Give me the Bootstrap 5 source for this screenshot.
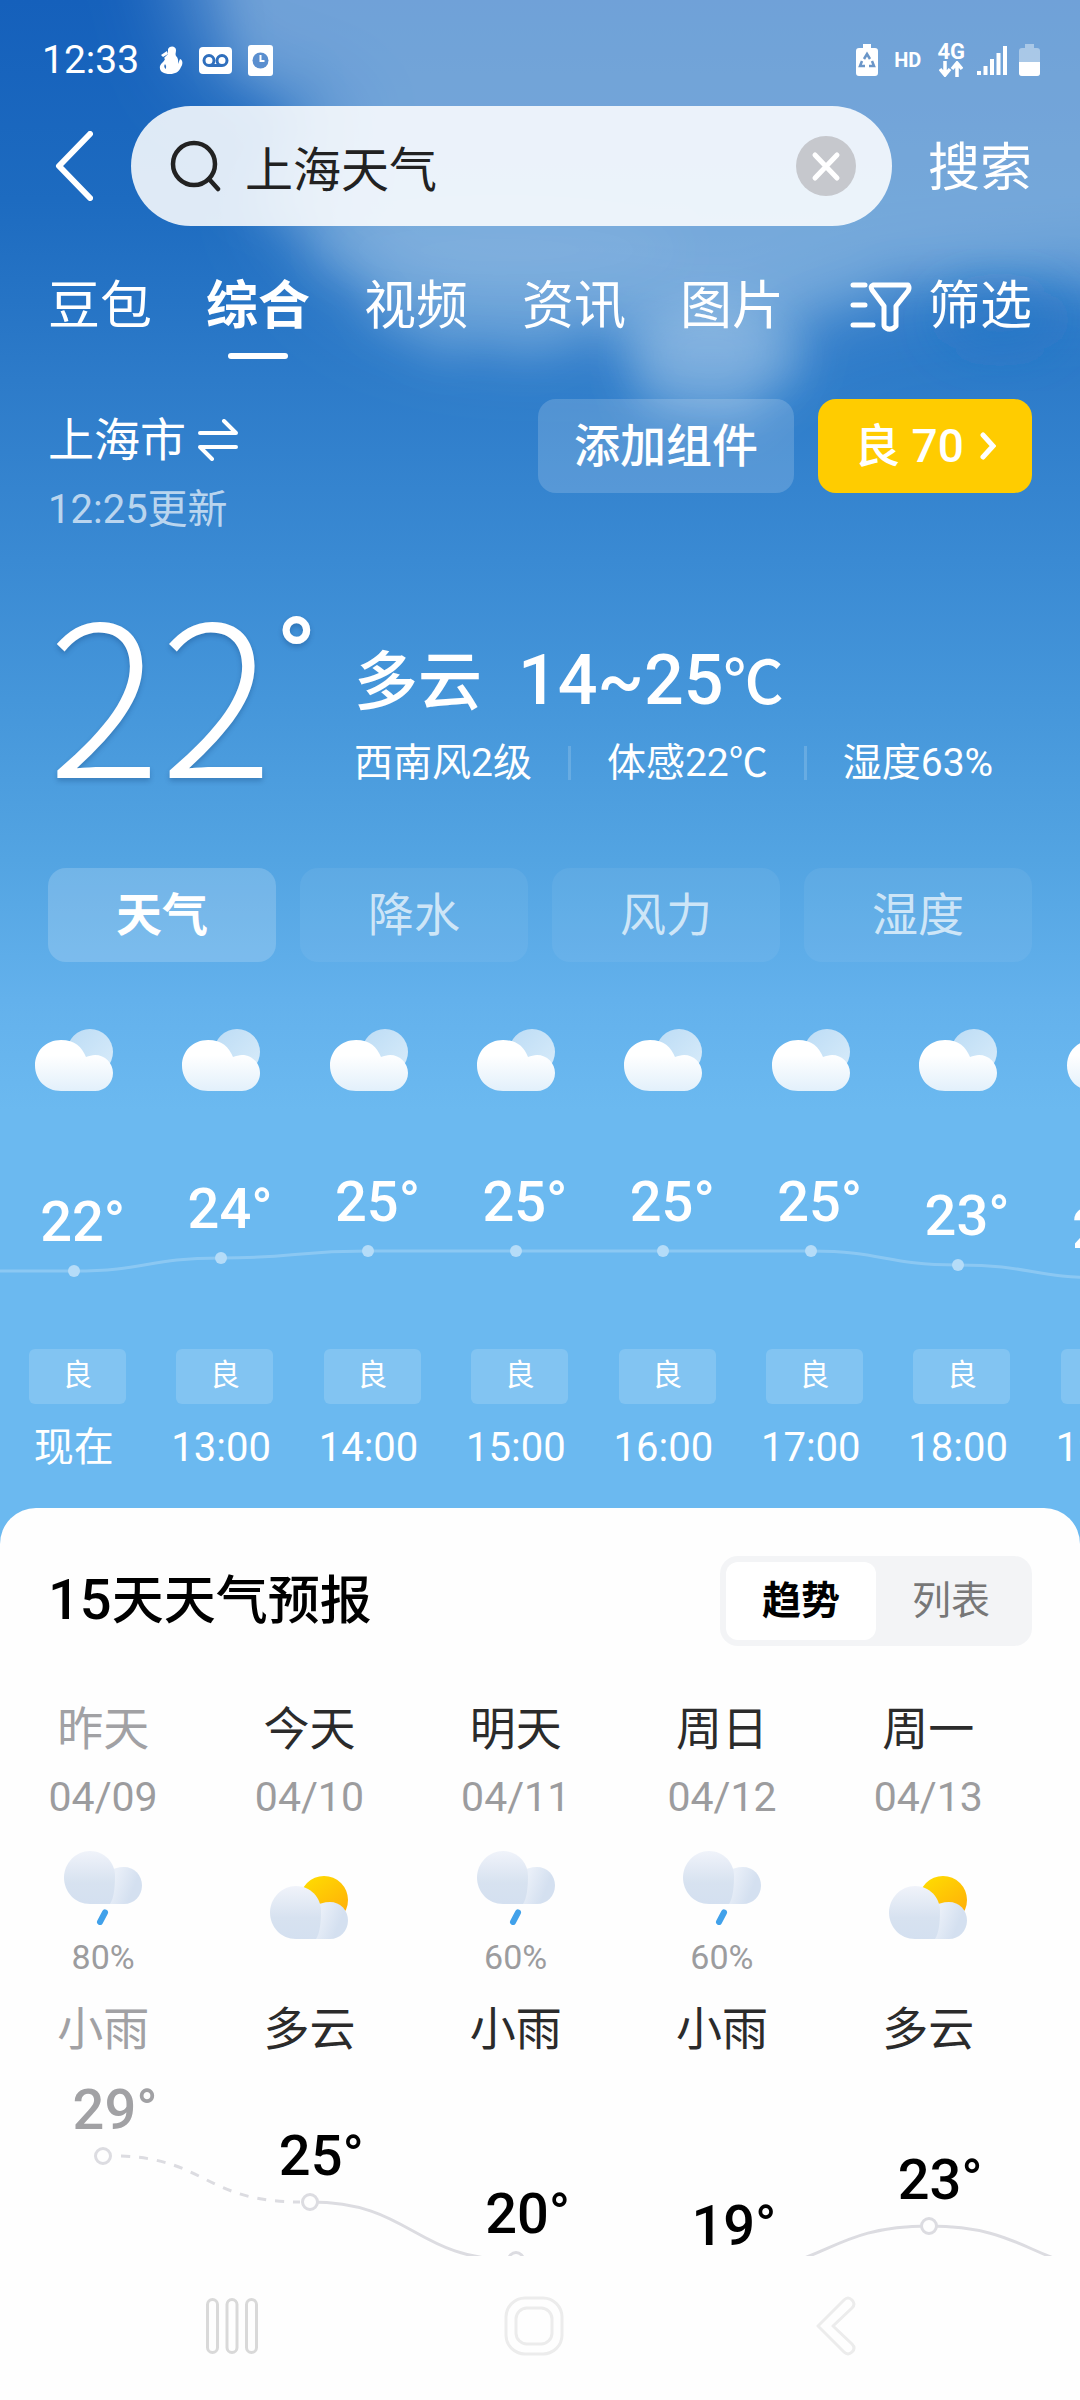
<!DOCTYPE html>
<html lang="zh-CN">
<head>
<meta charset="utf-8">
<meta name="viewport" content="width=device-width, initial-scale=1">
<title>上海天气</title>
<link href="https://cdn.jsdelivr.net/npm/bootstrap@5.3.0/dist/css/bootstrap.min.css" rel="stylesheet">
<style>
body{font-family:Roboto,"Noto Sans CJK SC",sans-serif;font-size:40px;line-height:48px;color:#fff;background:#fefefe;overflow-x:hidden}
a{text-decoration:none;color:inherit}
svg{display:block;flex:none}
.btn{--bs-btn-border-width:0px;--bs-btn-padding-x:0px;--bs-btn-padding-y:0px}
.sky{background:linear-gradient(#1560bb 0,#1d6bc0 200px,#2d7bc9 380px,#3a8ad3 560px,#4596da 700px,#53a4e2 860px,#63b1ec 1000px,#6bb9f0 1110px)}
.sky-clouds{position:absolute;top:0;left:0;width:100%;height:480px;z-index:0}
.gutter{padding-left:48px;padding-right:48px}
.status-row{padding:36px 40px 22px 42px}
.status-time{font-size:39px}
.hd-tag{font-size:20px;line-height:24px;font-weight:700}
.net-tag{font-size:22px;line-height:18px;font-weight:700}
.back-btn{flex:none;width:83px;height:120px;padding-left:7px!important}
.go-btn{flex:none;padding-top:5px!important}
.search-pill{height:120px;border-radius:60px;background:rgba(255,255,255,.86);padding:0 36px 0 38px;margin-right:36px}
.search-pill input{font-size:48px;line-height:60px;color:#222;padding:10px 0 0!important}
.search-pill input:focus{color:#222}
.t-52{font-size:52px;line-height:60px}
.t-46{font-size:46px;line-height:56px}
.tab-row{padding-top:51px}
.tab-list{gap:54px}
.tab-list .nav-link{padding:0;color:#fff}
.tab-list .active{font-weight:700}
.tab-list .active::after{content:"";display:block;width:60px;height:6px;border-radius:3px;background:#fff;margin:16px auto 0}
.place-row{margin-top:40px}
.place{padding-top:13px}
.place-swap{margin-left:12px}
.updated{margin-top:18px;color:rgba(255,255,255,.68)}
.pill-btn{height:94px;border-radius:18px;font-size:46px;line-height:56px;font-weight:500;color:#fff}
.pill-add{width:256px;background:rgba(255,255,255,.17)}
.pill-air{width:214px;background:#fc0}
.now-row{margin-top:63px}
.now-temp{width:306px;font-family:"Noto Sans CJK SC",sans-serif;font-size:210px;line-height:178px;font-weight:300;text-shadow:0 3px 5px rgba(0,40,90,.25)}
.now-deg{margin-left:3px;font-family:Roboto,sans-serif;font-size:108px;line-height:120px;font-weight:500}
.now-info{padding-top:43px}
.now-main{font-size:64px;line-height:80px;font-weight:500;gap:36px}
.now-range{font-size:70px}
.now-unit{font-size:60px}
.now-facts{margin-top:15px;font-size:39px;gap:36px}
.fact-line{width:3px;height:34px;background:rgba(255,255,255,.16)}
.chip-row{margin-top:81px;gap:24px}
.chip{height:94px;border-radius:18px;font-size:46px;line-height:56px;color:rgba(255,255,255,.7);background:rgba(255,255,255,.06)}
.chip.active{color:#fff;font-weight:700;background:rgba(255,255,255,.18)}
.hours{margin-top:67px;margin-bottom:36px}
.hour-col{flex:none;width:13.65%}
.hour-temp{height:257px}
.big-temp{font-size:56px;line-height:60px;font-weight:500;padding-left:18px}
.hour-line{position:absolute;left:0;top:63px;width:100%;height:257px}
.air-tag{width:97px;height:55px;border-radius:6px;margin-left:29px;background:rgba(255,255,255,.16);font-size:30px;line-height:52px}
.hour-time{margin-top:20px}
.sheet{background:#fefefe;color:#2b2b2b;border-radius:36px 36px 0 0;padding-top:48px}
.sheet-title{font-size:52px;line-height:60px;font-weight:500;color:#000}
.sheet-title span{font-size:56px}
.seg{background:#f3f4f6;border-radius:18px;padding:6px}
.seg .btn{width:150px;height:78px;border-radius:12px;font-size:39px;line-height:48px;color:#777}
.seg .btn.active{background:#fff;color:#000;font-weight:700}
.days{margin-top:55px}
.day-col{flex:none;width:19.1%}
.soft{color:#9c9c9e}
.day-date{margin-top:16px;font-size:41px}
.day-icon{height:142px;margin-top:15px}
.day-rain{font-size:34px;line-height:38px;margin-top:13px;margin-bottom:2px}
.day-text{margin-top:23px}
.day-temp{height:199px;padding-left:24px;color:#000}
.past .day-temp,.past .day-name,.past .day-text{color:#a1a1a4}
.day-line{position:absolute;left:0;bottom:0;width:100%;height:198px}
.phone-nav{height:144px;background:#fefefe;padding:0 224px 4px 206px}
</style>
</head>
<body>
<svg width="0" height="0" class="position-absolute" aria-hidden="true">
<defs>
<linearGradient id="gw" x1="0" y1="0" x2="0" y2="1"><stop offset=".3" stop-color="#fff"/><stop offset="1" stop-color="#e2f0fb"/></linearGradient>
<linearGradient id="gb" x1="0" y1="0" x2="1" y2="1"><stop offset="0" stop-color="#bcdcf5"/><stop offset="1" stop-color="#d9ecfa"/></linearGradient>
<linearGradient id="gs" x1="0" y1="0" x2=".7" y2="1"><stop offset="0" stop-color="#ffe000"/><stop offset="1" stop-color="#ffad0a"/></linearGradient>
<linearGradient id="gc" x1="0" y1="0" x2="0" y2="1"><stop offset="0" stop-color="#f0f3fa"/><stop offset=".6" stop-color="#d7e2f0"/><stop offset="1" stop-color="#d4e0f0"/></linearGradient>
<linearGradient id="gc2" gradientUnits="userSpaceOnUse" x1="50" y1="28" x2="70" y2="36"><stop offset="0" stop-color="#e9eff8"/><stop offset="1" stop-color="#d4e0f0"/></linearGradient>
<symbol id="cloudy" viewBox="0 0 78 63"><circle cx="55" cy="23" r="23" fill="url(#gb)"/><path d="M26 11C40 11 47 18 51 28c3-1 6-2 9-2 10 0 18 8 18 18s-8 18-18 18H26C11 62 0 51 0 36.500S11 11 26 11Z" fill="url(#gw)"/></symbol>
<symbol id="greycloud" viewBox="0 0 78 53"><path d="M60 16c10 0 18 8 18 18.500S70 53 60 53H40L46 20c3-2 8-4 14-4Z" fill="url(#gc2)"/><path d="M26 0c14 0 25 11 25 25 0 10-1 22-5 28H26C11 53 0 41 0 26.500S12 0 26 0Z" fill="url(#gc)"/></symbol>
<symbol id="rain" viewBox="0 0 78 74"><use href="#greycloud" width="78" height="53"/><path d="M41 61.500 36 71" stroke="#41a1ea" stroke-width="6" stroke-linecap="round"/></symbol>
<symbol id="partly" viewBox="0 0 78 63"><circle cx="54" cy="24" r="24" fill="url(#gs)"/><use href="#greycloud" y="10" width="78" height="53"/></symbol>
</defs>
</svg>

<div class="sky position-relative">
<svg class="sky-clouds" viewBox="0 0 1080 480" preserveAspectRatio="none" aria-hidden="true">
<defs>
<filter id="wisp" x="-10%" y="-20%" width="120%" height="140%"><feTurbulence type="fractalNoise" baseFrequency=".014 .018" numOctaves="5" seed="11" result="n"/><feDisplacementMap in="SourceGraphic" in2="n" scale="90" xChannelSelector="R" yChannelSelector="G" result="d"/><feGaussianBlur in="d" stdDeviation="20"/></filter>
<filter id="haze" x="-20%" y="-20%" width="140%" height="140%"><feGaussianBlur stdDeviation="42"/></filter>
<filter id="soft" x="-60%" y="-60%" width="220%" height="220%"><feGaussianBlur stdDeviation="24"/></filter>
</defs>
<path filter="url(#haze)" fill="#f0fcff" fill-opacity=".3" d="M150-120H1250V265L1000 280 860 300 790 330C760 360 680 350 620 330L470 330 370 300 270 200 350 120 200 70Z"/>
<path filter="url(#wisp)" fill="#f0fcff" fill-opacity=".16" d="M200-90H1200V285L1010 275 890 285 790 310C810 380 780 430 710 430L630 410 590 340 480 360 390 340 330 260 250 200 280 130 330 110 240 60Z"/>
<ellipse filter="url(#soft)" cx="710" cy="355" rx="75" ry="50" fill="#fff" fill-opacity=".2"/>
<ellipse filter="url(#soft)" cx="500" cy="250" rx="180" ry="30" fill="#fff" fill-opacity=".07"/>
<ellipse filter="url(#soft)" cx="1000" cy="320" rx="60" ry="32" fill="#2474c5" fill-opacity=".45"/>
</svg>

<div class="position-relative">
<div class="status-row d-flex align-items-center justify-content-between">
<div class="d-flex align-items-center gap-3">
<span class="status-time">12:33</span>
<svg class="ms-1" width="24" height="28" viewBox="0 0 24 28" fill="#fff"><path d="M9 3c2-4 8-3 8 1 0 3-1 4 0 6 3 3 2 6 2 8l2-5c3 1 3 5 1 8-2 5-6 7-11 7C4 28 0 25 1 20c1-3 4-4 5-7l-1-1 4-4Z"/><path d="M2 9l6-4 1 3-5 3Z"/><path d="M6 18q2 2 1 5-3-2-1-5Z" fill="#2f6fbd"/></svg>
<svg width="33" height="27" viewBox="0 0 33 27"><rect width="33" height="27" rx="4" fill="#fff"/><g fill="none" stroke="#2f6fbd" stroke-width="3"><circle cx="10" cy="13.500" r="5"/><circle cx="23" cy="13.500" r="5"/><path d="M10 18.500h13"/></g></svg>
<svg width="25" height="31" viewBox="0 0 25 31"><rect width="25" height="31" rx="3" fill="#fff"/><circle cx="12.500" cy="15.500" r="8" fill="#5b8fcf"/><path d="M12.500 10v6h4" fill="none" stroke="#fff" stroke-width="2"/></svg>
</div>
<div class="d-flex align-items-center">
<svg width="22" height="32" viewBox="0 0 22 32"><path d="M7 0h8v4h4q3 0 3 3v22q0 3-3 3H3q-3 0-3-3V7q0-3 3-3h4Z" fill="#fff"/><g fill="none" stroke="#6b96c8" stroke-width="2.500"><path d="M8 15l3-5 3 5M6 17l-2 5h5M16 17l2 5h-5"/></g></svg>
<span class="hd-tag ms-3 me-3">HD</span>
<div class="d-flex flex-column align-items-center"><span class="net-tag">4G</span><svg width="24" height="16" viewBox="0 0 24 16" fill="none" stroke="#fff" stroke-width="3.500"><path d="M6 0v13M1 8l5 6 5-6M18 16V3M13 8l5-6 5 6"/></svg></div>
<svg class="ms-2 me-2" width="38" height="29" viewBox="0 0 38 29" stroke="#fff" stroke-width="4"><path d="M6 25v4M12.500 20v9M19 13v16M25.500 7v22M32 0v29"/></svg>
<svg width="21" height="32" viewBox="0 0 21 32"><path d="M6 0h9v4h3q3 0 3 3v22q0 3-3 3H3q-3 0-3-3V7q0-3 3-3h3Z" fill="#fff" fill-opacity=".4"/><path d="M0 18h21v11q0 3-3 3H3q-3 0-3-3Z" fill="#fff"/></svg>
</div>
</div>

<form class="gutter d-flex align-items-center" onsubmit="return false">
<button type="button" class="btn back-btn text-start" aria-label="返回"><svg width="38" height="70" viewBox="0 0 38 70" fill="none" stroke="#fff" stroke-width="6" stroke-linecap="round" stroke-linejoin="round"><path d="M35 3 4 35l31 32"/></svg></button>
<div class="search-pill d-flex align-items-center flex-fill">
<svg width="52" height="52" viewBox="0 0 52 52" fill="none" stroke="#222" stroke-width="4.500" stroke-linecap="round"><circle cx="25" cy="24" r="21"/><path d="M40 39l9 10"/></svg>
<input id="q" type="text" class="form-control border-0 bg-transparent shadow-none ms-4" value="上海天气" aria-label="搜索内容">
<button type="button" class="btn" aria-label="清除"><svg width="60" height="60" viewBox="0 0 60 60"><circle cx="30" cy="30" r="30" fill="#c6c8cd"/><path d="M19 19l22 23M41 19 19 42" stroke="#fff" stroke-width="5" stroke-linecap="round"/></svg></button>
</div>
<button type="submit" class="btn go-btn t-52 text-white text-nowrap">搜索</button>
</form>

<nav class="gutter tab-row d-flex justify-content-between align-items-start t-52">
<div class="nav tab-list flex-nowrap">
<a class="nav-link" href="#">豆包</a><a class="nav-link active" href="#" aria-current="page">综合</a><a class="nav-link" href="#">视频</a><a class="nav-link" href="#">资讯</a><a class="nav-link" href="#">图片</a>
</div>
<a href="#" class="d-flex align-items-center"><svg class="me-3" width="62" height="52" viewBox="0 0 62 52" fill="none" stroke="#fff" stroke-width="5" stroke-linecap="round" stroke-linejoin="round"><path d="M3 4h12M3 24h12M3 44h20M23 4h35q2 3 0 6L46 25v20q-5 5-10 2-2-1-2-3V25L22 9q-2-4 1-5Z"/></svg>筛选</a>
</nav>

<div class="gutter place-row d-flex justify-content-between align-items-start">
<div class="place">
<a href="#" class="d-flex align-items-center t-46">上海市<svg class="place-swap" width="40" height="42" viewBox="0 0 40 42" fill="none" stroke="#fff" stroke-width="4" stroke-linecap="round" stroke-linejoin="round"><path d="M2 14h36L26 2M38 28H2l12 12"/></svg></a>
<div class="updated">12:25更新</div>
</div>
<div class="d-flex gap-4">
<button type="button" class="btn pill-btn pill-add">添加组件</button>
<button type="button" class="btn pill-btn pill-air d-flex align-items-center justify-content-center">良 70<svg class="ms-3" width="16" height="28" viewBox="0 0 16 28" fill="none" stroke="#fff" stroke-width="5" stroke-linecap="round"><path d="M3 3l10 11L3 25"/></svg></button>
</div>
</div>

<div class="gutter now-row d-flex">
<div class="now-temp d-flex align-items-start">22<span class="now-deg">°</span></div>
<div class="now-info">
<div class="now-main d-flex align-items-baseline"><span>多云</span><span class="now-range">14~25<span class="now-unit">℃</span></span></div>
<div class="now-facts d-flex align-items-center"><span>西南风2级</span><i class="fact-line"></i><span>体感22℃</span><i class="fact-line"></i><span>湿度63%</span></div>
</div>
</div>

<div class="gutter chip-row d-flex">
<button type="button" class="btn chip active flex-fill">天气</button>
<button type="button" class="btn chip flex-fill">降水</button>
<button type="button" class="btn chip flex-fill">风力</button>
<button type="button" class="btn chip flex-fill">湿度</button>
</div>

<div class="hours d-flex position-relative overflow-hidden text-center">
<svg class="hour-line" viewBox="0 0 1080 257" preserveAspectRatio="none" aria-hidden="true">
<path d="M0 179H74C147 179 147 166 221 166S295 159 368 159H811C884 159 884 173 958 173S1032 186 1106 186" fill="none" stroke="#fff" stroke-opacity=".22" stroke-width="3"/>
<g fill="#b5dcf8"><circle cx="74" cy="179" r="6"/><circle cx="221" cy="166" r="6"/><circle cx="368" cy="159" r="6"/><circle cx="516" cy="159" r="6"/><circle cx="663" cy="159" r="6"/><circle cx="811" cy="159" r="6"/><circle cx="958" cy="173" r="6"/></g>
</svg>
<div class="hour-col"><svg class="mx-auto" width="78" height="63"><use href="#cloudy"/></svg><div class="hour-temp big-temp" style="padding-top:100px">22°</div><div class="air-tag">良</div><div class="hour-time">现在</div></div>
<div class="hour-col"><svg class="mx-auto" width="78" height="63"><use href="#cloudy"/></svg><div class="hour-temp big-temp" style="padding-top:87px">24°</div><div class="air-tag">良</div><div class="hour-time">13:00</div></div>
<div class="hour-col"><svg class="mx-auto" width="78" height="63"><use href="#cloudy"/></svg><div class="hour-temp big-temp" style="padding-top:80px">25°</div><div class="air-tag">良</div><div class="hour-time">14:00</div></div>
<div class="hour-col"><svg class="mx-auto" width="78" height="63"><use href="#cloudy"/></svg><div class="hour-temp big-temp" style="padding-top:80px">25°</div><div class="air-tag">良</div><div class="hour-time">15:00</div></div>
<div class="hour-col"><svg class="mx-auto" width="78" height="63"><use href="#cloudy"/></svg><div class="hour-temp big-temp" style="padding-top:80px">25°</div><div class="air-tag">良</div><div class="hour-time">16:00</div></div>
<div class="hour-col"><svg class="mx-auto" width="78" height="63"><use href="#cloudy"/></svg><div class="hour-temp big-temp" style="padding-top:80px">25°</div><div class="air-tag">良</div><div class="hour-time">17:00</div></div>
<div class="hour-col"><svg class="mx-auto" width="78" height="63"><use href="#cloudy"/></svg><div class="hour-temp big-temp" style="padding-top:94px">23°</div><div class="air-tag">良</div><div class="hour-time">18:00</div></div>
<div class="hour-col"><svg class="mx-auto" width="78" height="63"><use href="#cloudy"/></svg><div class="hour-temp big-temp" style="padding-top:107px">21°</div><div class="air-tag">良</div><div class="hour-time">19:00</div></div>
</div>

<section class="sheet">
<div class="gutter d-flex justify-content-between align-items-center">
<h2 class="sheet-title m-0"><span>15</span>天天气预报</h2>
<div class="seg d-flex"><button type="button" class="btn active">趋势</button><button type="button" class="btn">列表</button></div>
</div>
<div class="days d-flex position-relative overflow-hidden text-center">
<svg class="day-line" viewBox="0 0 1080 198" preserveAspectRatio="none" fill="none" stroke="#dcdce1" stroke-width="3" aria-hidden="true">
<path d="M121 98C206 101 206 144 300 144" stroke-dasharray="9 9"/>
<path d="M310 144C413 144 413 202 516 202S619 214 722 214C826 214 826 168 929 168S1032 214 1135 214"/>
<g fill="#fefefe"><circle cx="103" cy="98" r="7.500"/><circle cx="310" cy="144" r="7.500"/><circle cx="516" cy="202" r="7.500"/><circle cx="722" cy="214" r="7.500"/><circle cx="929" cy="168" r="7.500"/></g>
</svg>
<div class="day-col past"><div class="day-name t-46">昨天</div><div class="day-date soft">04/09</div><div class="day-icon d-flex flex-column align-items-center justify-content-end"><svg width="78" height="74"><use href="#rain"/></svg><div class="day-rain soft">80%</div></div><div class="day-text t-46">小雨</div><div class="day-temp big-temp" style="padding-top:23px">29°</div></div>
<div class="day-col"><div class="day-name t-46">今天</div><div class="day-date soft">04/10</div><div class="day-icon d-flex flex-column align-items-center justify-content-center"><svg width="78" height="63"><use href="#partly"/></svg></div><div class="day-text t-46">多云</div><div class="day-temp big-temp" style="padding-top:69px">25°</div></div>
<div class="day-col"><div class="day-name t-46">明天</div><div class="day-date soft">04/11</div><div class="day-icon d-flex flex-column align-items-center justify-content-end"><svg width="78" height="74"><use href="#rain"/></svg><div class="day-rain soft">60%</div></div><div class="day-text t-46">小雨</div><div class="day-temp big-temp" style="padding-top:127px">20°</div></div>
<div class="day-col"><div class="day-name t-46">周日</div><div class="day-date soft">04/12</div><div class="day-icon d-flex flex-column align-items-center justify-content-end"><svg width="78" height="74"><use href="#rain"/></svg><div class="day-rain soft">60%</div></div><div class="day-text t-46">小雨</div><div class="day-temp big-temp" style="padding-top:139px">19°</div></div>
<div class="day-col"><div class="day-name t-46">周一</div><div class="day-date soft">04/13</div><div class="day-icon d-flex flex-column align-items-center justify-content-center"><svg width="78" height="63"><use href="#partly"/></svg></div><div class="day-text t-46">多云</div><div class="day-temp big-temp" style="padding-top:93px">23°</div></div>
</div>
</section>

<div class="phone-nav d-flex justify-content-between align-items-center">
<button type="button" class="btn" aria-label="最近任务"><svg width="52" height="60" viewBox="0 0 52 60" fill="none" stroke="#d9d9d9" stroke-width="3"><rect x="1.500" y="3.500" width="10" height="53" rx="5"/><rect x="21" y="3.500" width="10" height="53" rx="5"/><rect x="40.500" y="3.500" width="10" height="53" rx="5"/></svg></button>
<button type="button" class="btn" aria-label="主屏幕"><svg width="60" height="60" viewBox="0 0 60 60" fill="none" stroke="#ececec" stroke-width="3"><rect x="2" y="2" width="56" height="56" rx="19"/><rect x="12" y="12" width="36" height="36" rx="11"/></svg></button>
<button type="button" class="btn" aria-label="返回"><svg width="46" height="60" viewBox="-6 0 46 60" fill="none" stroke="#ececec" stroke-width="3" stroke-linejoin="round"><path d="M2 30 28 4q4-4 8 0t0 8L17 30l19 18q4 4 0 8t-8 0Z"/></svg></button>
</div>
</div>
</div>
<script src="https://cdn.jsdelivr.net/npm/bootstrap@5.3.0/dist/js/bootstrap.bundle.min.js"></script>
</body>
</html>
